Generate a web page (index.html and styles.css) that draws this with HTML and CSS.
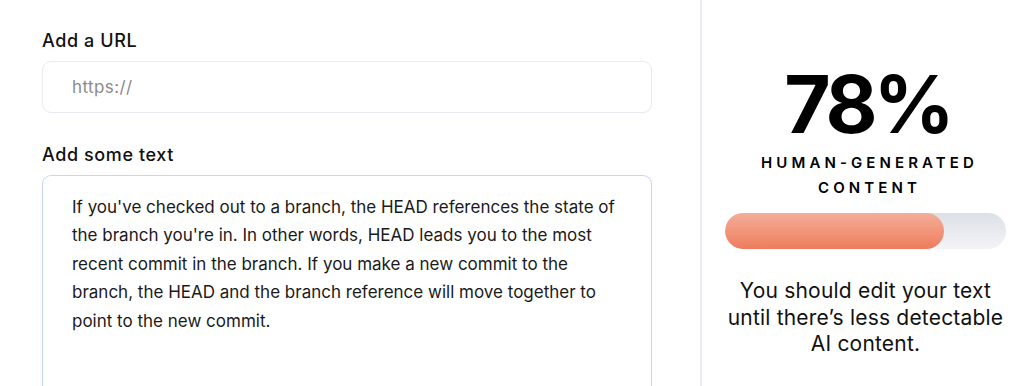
FILE: index.html
```html
<!DOCTYPE html>
<html lang="en">
<head>
<meta charset="utf-8">
<title>AI Content Detector</title>
<link rel="stylesheet" href="styles.css">
</head>
<body>
<main class="page">
  <section class="editor">
    <label class="field-label" for="url">Add a URL</label>
    <div class="url-input" id="url">https://</div>
    <label class="field-label field-label--second" for="text">Add some text</label>
    <div class="text-area" id="text">If you've checked out to a branch, the HEAD references the state of the branch you're in. In other words, HEAD leads you to the most recent commit in the branch. If you make a new commit to the branch, the HEAD and the branch reference will move together to point to the new commit.</div>
  </section>
  <aside class="result">
    <div class="score">78%</div>
    <div class="score-caption">HUMAN-GENERATED<br>CONTENT</div>
    <div class="meter"><div class="meter-fill" style="width: 78%"></div></div>
    <p class="advice">You should edit your text until there’s less detectable AI content.</p>
  </aside>
</main>
</body>
</html>
```

FILE: styles.css
```css
* { box-sizing: border-box; }
html, body { margin: 0; padding: 0; background: #ffffff; }
body {
  font-family: "Inter", "Open Sans", sans-serif;
  color: #111111;
  height: 386px;
  overflow: hidden;
}
.page {
  display: flex;
  height: 386px;
}
.editor {
  width: 702px;
  flex: none;
  padding: 28.5px 48px 0 42px;
  border-right: 2px solid #ececf4;
  display: flex;
  flex-direction: column;
}
.field-label {
  display: block;
  font-size: 18px;
  font-weight: 500;
  line-height: 24px;
  letter-spacing: 0.6px;
  color: #111111;
  margin-bottom: 8.5px;
}
.field-label--second {
  margin-top: 29.5px;
  margin-bottom: 8.5px;
}
.url-input {
  height: 52px;
  border: 1px solid #e9e9f1;
  border-radius: 9px;
  padding: 0 29px;
  display: flex;
  align-items: center;
  font-size: 17px;
  letter-spacing: 0.4px;
  color: #8a8a8a;
}
.text-area {
  flex: 1;
  border: 1px solid #c8d3fb;
  border-bottom: none;
  border-radius: 9px 9px 0 0;
  padding: 16.5px 26px 0 29px;
  font-size: 17px;
  line-height: 28.5px;
  letter-spacing: 0;
  color: #1a1a1a;
}
.result {
  flex: 1;
  padding: 62px 8px 0 13px;
  display: flex;
  flex-direction: column;
  align-items: stretch;
  text-align: center;
}
.score {
  font-size: 80px;
  font-weight: 700;
  line-height: 84px;
  color: #000000;
  letter-spacing: -4px;
  padding-left: 4px;
}
.score-caption {
  margin-top: 4px;
  font-size: 15px;
  font-weight: 600;
  line-height: 25px;
  letter-spacing: 4.1px;
  padding-left: 8px;
  color: #000000;
}
.meter {
  margin: 13px 10px 0 10px;
  height: 36px;
  border-radius: 18px;
  background: linear-gradient(to bottom, #dde0e8, #f4f4f7);
  overflow: hidden;
}
.meter-fill {
  height: 100%;
  border-radius: 18px;
  background: linear-gradient(to bottom, #f4ae98, #ee7c5d);
}
.advice {
  margin: 29px 5px 0 5px;
  font-size: 21px;
  line-height: 26.5px;
  letter-spacing: 0.2px;
  color: #111111;
}
```
